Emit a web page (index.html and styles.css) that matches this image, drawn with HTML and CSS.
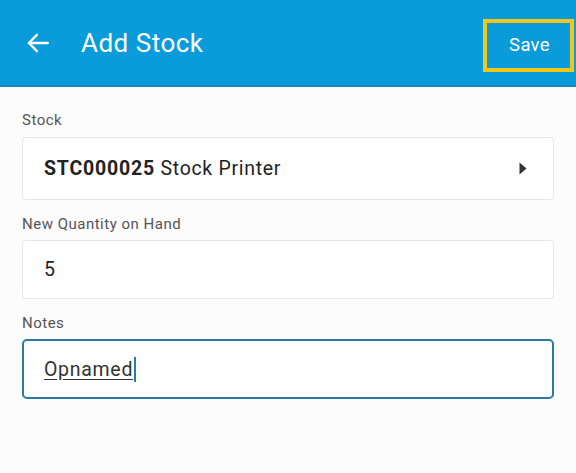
FILE: index.html
```html
<!DOCTYPE html>
<html>
<head>
<meta charset="utf-8">
<link rel="stylesheet" href="styles.css">
</head>
<body>
<header class="appbar">
  <div class="back">
    <svg width="26" height="26" viewBox="0 0 24 24"><path d="M21 12H3.5M11 4.5L3.5 12L11 19.5" fill="none" stroke="#fff" stroke-width="2.2" stroke-linecap="round" stroke-linejoin="round"/></svg>
  </div>
  <h1 class="title">Add Stock</h1>
  <button class="save">Save</button>
</header>
<main class="form">
  <label class="label">Stock</label>
  <div class="field select">
    <span><b>STC000025</b> Stock Printer</span>
    <svg class="caret" width="8" height="13" viewBox="0 0 8 13"><path d="M0.5 0.5L7.5 6.5L0.5 12.5Z" fill="#333"/></svg>
  </div>
  <label class="label">New Quantity on Hand</label>
  <div class="field">5</div>
  <label class="label">Notes</label>
  <div class="field focus"><span class="typed">Opnamed</span><span class="cursor"></span></div>
</main>
</body>
</html>
```
FILE: styles.css
```css
* { box-sizing: border-box; }
html, body { margin: 0; padding: 0; }
body {
  width: 576px;
  height: 473px;
  background: #fcfcfc;
  font-family: Roboto, "Noto Sans", sans-serif;
  overflow: hidden;
}
.appbar {
  height: 87px;
  background: #0a9bdb;
  border-bottom: 2px solid #0d86bd;
  display: flex;
  align-items: center;
  padding: 0 2px 0 25px;
}
.back { width: 26px; height: 26px; display: flex; }
.title {
  margin: 0 0 0 30px;
  font-weight: 400;
  font-size: 26px;
  color: #fff;
  flex: 1;
  letter-spacing: 0.5px;
}
.save {
  width: 91px;
  height: 53px;
  border: 4px solid #f1c71c;
  background: transparent;
  color: #fff;
  font-family: Roboto, sans-serif;
  font-size: 18.5px;
  letter-spacing: 0.3px;
  margin-top: 6px;
  padding: 0 0 2px 2px;
}
.form {
  display: flex;
  flex-direction: column;
  padding: 0 22px;
}
.label {
  font-size: 15px;
  color: #555;
  letter-spacing: 0.5px;
  margin-top: 17px;
  height: 14px;
  line-height: 14px;
  margin-bottom: 9px;
}
.form .label:first-child { margin-top: 26px; margin-bottom: 10px; }
.field {
  height: 59px;
  background: #fff;
  border: 1px solid #e6e6e6;
  border-radius: 4px;
  display: flex;
  align-items: center;
  padding: 0 21px;
  font-size: 19.5px;
  color: #222;
  letter-spacing: 0.7px;
}
.field.select { height: 63px; }
.select b { font-weight: 700; letter-spacing: 0.8px; }
.select span { flex: 1; }
.caret { margin-right: 5px; }
.focus {
  height: 60px;
  border: 2px solid #2a7aa0;
  border-radius: 5px;
  padding-left: 20px;
}
.typed { text-decoration: underline; text-underline-offset: 3px; color: #333; }
.cursor {
  display: inline-block;
  width: 2px;
  height: 25px;
  background: #1f7fa6;
  margin-left: 1px;
}
```
